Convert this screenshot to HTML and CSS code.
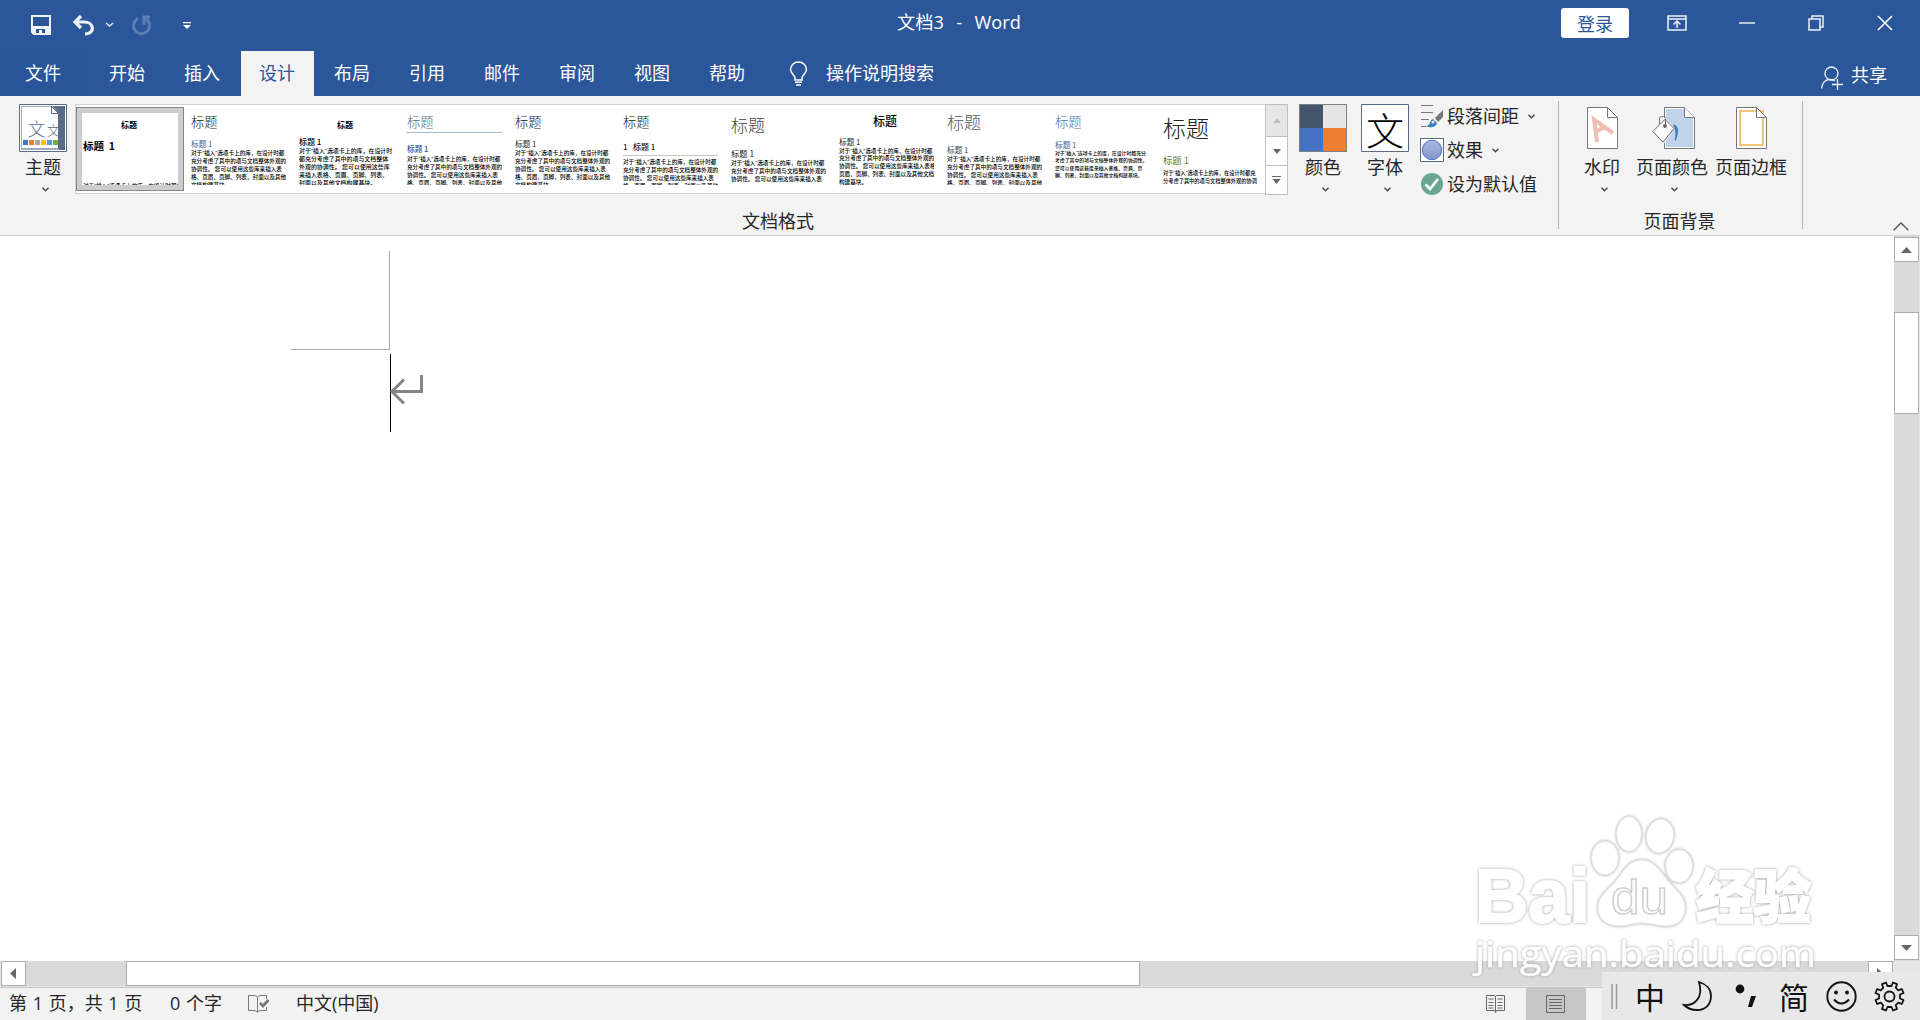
FILE: index.html
```html
<!DOCTYPE html>
<html lang="zh-CN">
<head>
<meta charset="utf-8">
<title>文档3 - Word</title>
<link rel="stylesheet" href="styles.css">
</head>
<body>
<div class="app">
  <header class="titlebar">
    <div class="quick">
      <svg class="save" width="20" height="20" viewBox="0 0 20 20"><path d="M1 1h18v18H3l-2-2z" fill="none" stroke="#f0f3f8" stroke-width="2"/><path d="M2 11h16v1.500H2zM1 12h4v7H1zM14 12h5v7h-5zM5 12h9v2H5zM8 15h3v4H8z" fill="#f0f3f8"/></svg>
      <svg class="undo" width="24" height="22" viewBox="0 0 24 22"><path d="M9 1L3 7l6 6M3 7h9c11 0 11 12 1 12" fill="none" stroke="#f0f3f8" stroke-width="3.200"/></svg>
      <svg class="undo-more" width="9" height="6" viewBox="0 0 9 6"><path d="M1 1l3.500 3L8 1" fill="none" stroke="#e0e6f0" stroke-width="1.400"/></svg>
      <svg class="redo" width="22" height="22" viewBox="0 0 22 22"><path d="M7 3.500A8 8 0 1 0 15 4M13 10V2h6" fill="none" stroke="#5c7db2" stroke-width="3"/></svg>
      <svg class="custom" width="8" height="8" viewBox="0 0 8 8"><path d="M0 0h8v1.300H0zM0 3h8L4 7z" fill="#fff"/></svg>
    </div>
    <h1 class="doc-title">文档3&nbsp; -&nbsp; Word</h1>
    <div class="window-tools">
      <button class="login">登录</button>
      <svg class="rdo" width="20" height="16" viewBox="0 0 20 16"><path d="M1 1h18v14H1zM1 4h18M10 13V7M6.500 9.500L10 6l3.500 3.500" fill="none" stroke="#eef2f8" stroke-width="1.500"/></svg>
      <svg class="min" width="16" height="2" viewBox="0 0 16 2"><path d="M0 1h16" stroke="#e4eaf3" stroke-width="1.500"/></svg>
      <svg class="restore" width="16" height="16" viewBox="0 0 16 16"><path d="M1 4h11v11H1zM4 4V1h11v11h-3" fill="none" stroke="#eef2f8" stroke-width="1.500"/></svg>
      <svg class="close" width="16" height="16" viewBox="0 0 16 16"><path d="M1 1l14 14M15 1L1 15" stroke="#fff" stroke-width="1.600"/></svg>
    </div>
  </header>

  <nav class="tabs">
    <span class="tab file">文件</span>
    <span class="tab">开始</span>
    <span class="tab">插入</span>
    <span class="tab active">设计</span>
    <span class="tab">布局</span>
    <span class="tab">引用</span>
    <span class="tab">邮件</span>
    <span class="tab">审阅</span>
    <span class="tab">视图</span>
    <span class="tab">帮助</span>
    <svg class="bulb" width="19" height="25" viewBox="0 0 19 25"><path d="M6 19v-2.500C5.500 14 1.500 12 1.500 8.500a8 7.500 0 0 1 16 0C17.500 12 13.500 14 13 16.500V19zM6 21.300h7M7 24h5" fill="none" stroke="#fff" stroke-width="1.500"/></svg>
    <span class="tell">操作说明搜索</span>
    <div class="share">
      <svg width="22" height="24" viewBox="0 0 22 24"><circle cx="10.500" cy="7.500" r="6.500" fill="none" stroke="#eef2f8" stroke-width="1.300"/><path d="M.700 22.500c0-5 3.500-9 8-9 2.500 0 4 .5 5 1.500M16.500 13v11M11 18.500h11" fill="none" stroke="#eef2f8" stroke-width="1.300"/></svg>
      <span>共享</span>
    </div>
  </nav>

  <section class="ribbon">
    <div class="group format">
      <div class="controls">
        <div class="big theme">
          <svg width="48" height="48" viewBox="0 0 48 48"><path d="M.5.500h47v47H.500z" fill="#fff" stroke="#5b6b85"/><path d="M2 2h44v44H2z" fill="#9cabbf"/><path d="M34 2h12v44H40V10z" fill="#5b6b85"/><path d="M3 3h29l7 7v34H3z" fill="#fff"/><path d="M32.500 2.500v7h7z" fill="#fff" stroke="#5b6b85"/><text x="8.500" y="32" font-size="18" fill="#6b7a92">文</text><text x="28" y="31" font-size="13" fill="#5b6b85">文</text><path d="M39 10h7v35h-7z" fill="#5b6b85"/><path d="M4 36h5v5H4z" fill="#4472c4"/><path d="M10 36h5v5h-5z" fill="#ed7d31"/><path d="M16 36h5v5h-5z" fill="#a5a5a5"/><path d="M22 36h5v5h-5z" fill="#ffc000"/><path d="M28 36h5v5h-5z" fill="#5b9bd5"/><path d="M34 36h5v5h-5z" fill="#70ad47"/></svg>
          <span>主题</span>
          <svg class="chev" width="7" height="5" viewBox="0 0 7 5"><path d="M.5.800l3 3 3-3"/></svg>
        </div>
        <div class="gallery">
          <div class="cell selected"><div class="thumb s1">
            <b class="t">标题</b><b class="h">标题&nbsp; 1</b><p>对于“插入”选项卡上的库，在设计时都充</p>
          </div></div>
          <div class="cell"><div class="thumb s2">
            <span class="t">标题</span><span class="h">标题 1</span>
            <p>对于“插入”选项卡上的库，在设计时都</p><p>充分考虑了其中的项与文档整体外观的</p><p>协调性。 您可以使用这些库来插入表</p><p>格、页眉、页脚、列表、封面以及其他</p><p>文档构建基块。</p>
          </div></div>
          <div class="cell"><div class="thumb s3">
            <b class="t">标题</b><span class="h">标题 1</span>
            <p>对于“插入”选项卡上的库，在设计时</p><p>都充分考虑了其中的项与文档整体</p><p>外观的协调性。 您可以使用这些库</p><p>来插入表格、页眉、页脚、列表、</p><p>封面以及其他文档构建基块。</p>
          </div></div>
          <div class="cell"><div class="thumb s4">
            <span class="t">标题</span><span class="h">标题 1</span>
            <p>对于“插入”选项卡上的库，在设计时都</p><p>充分考虑了其中的项与文档整体外观的</p><p>协调性。 您可以使用这些库来插入表</p><p>格、页眉、页脚、列表、封面以及其他</p>
          </div></div>
          <div class="cell"><div class="thumb s5">
            <span class="t">标题</span><span class="h">标题 1</span>
            <p>对于“插入”选项卡上的库，在设计时都</p><p>充分考虑了其中的项与文档整体外观的</p><p>协调性。 您可以使用这些库来插入表</p><p>格、页眉、页脚、列表、封面以及其他</p><p>文档构建基块。</p>
          </div></div>
          <div class="cell"><div class="thumb s6">
            <span class="t">标题</span><span class="h">1&nbsp;&nbsp; 标题 1</span>
            <p>对于“插入”选项卡上的库，在设计时都</p><p>充分考虑了其中的项与文档整体外观的</p><p>协调性。 您可以使用这些库来插入表</p><p>格、页眉、页脚、列表、封面以及其他</p>
          </div></div>
          <div class="cell"><div class="thumb s7">
            <span class="t">标题</span><span class="h">标题 1</span>
            <p>对于“插入”选项卡上的库，在设计时都</p><p>充分考虑了其中的项与文档整体外观的</p><p>协调性。 您可以使用这些库来插入表</p>
          </div></div>
          <div class="cell"><div class="thumb s8">
            <span class="t">标题</span><span class="h">标题 1</span>
            <p>对于“插入”选项卡上的库，在设计时都</p><p>充分考虑了其中的项与文档整体外观的</p><p>协调性。 您可以使用这些库来插入表格</p><p>页眉、页脚、列表、封面以及其他文档</p><p>构建基块。</p>
          </div></div>
          <div class="cell"><div class="thumb s9">
            <span class="t">标题</span><span class="h">标题 1</span>
            <p>对于“插入”选项卡上的库，在设计时都</p><p>充分考虑了其中的项与文档整体外观的</p><p>协调性。 您可以使用这些库来插入表</p><p>格、页眉、页脚、列表、封面以及其他</p>
          </div></div>
          <div class="cell"><div class="thumb s10">
            <span class="t">标题</span><span class="h">标题 1</span>
            <p>对于“插入”选项卡上的库，在设计时都充分</p><p>考虑了其中的项与文档整体外观的协调性。</p><p>您可以使用这些库来插入表格、页眉、页</p><p>脚、列表、封面以及其他文档构建基块。</p>
          </div></div>
          <div class="cell"><div class="thumb s11">
            <span class="t">标题</span><span class="h">标题 1</span>
            <p>对于“插入”选项卡上的库，在设计时都充</p><p>分考虑了其中的项与文档整体外观的协调</p>
          </div></div>
        </div>
        <div class="gallery-nav">
          <div class="off"><svg width="8" height="5" viewBox="0 0 8 5"><path d="M0 5l4-5 4 5z" fill="#bdbdbd"/></svg></div>
          <div><svg width="8" height="5" viewBox="0 0 8 5"><path d="M0 0h8L4 5z" fill="#666"/></svg></div>
          <div><svg width="9" height="8" viewBox="0 0 9 8"><path d="M0 0h9v1H0zM.5 3h8l-4 5z" fill="#666"/></svg></div>
        </div>
        <div class="big colors">
          <svg width="48" height="48" viewBox="0 0 48 48"><path d="M0 0h48v48H0z" fill="#7f7f7f"/><path d="M1 1h23v23H1z" fill="#44546a"/><path d="M24 1h23v23H24z" fill="#e7e6e6"/><path d="M1 24h23v23H1z" fill="#4472c4"/><path d="M24 24h23v23H24z" fill="#ed7d31"/></svg>
          <span>颜色</span>
          <svg class="chev" width="7" height="5" viewBox="0 0 7 5"><path d="M.5.800l3 3 3-3"/></svg>
        </div>
        <div class="big fonts">
          <svg width="48" height="48" viewBox="0 0 48 48"><path d="M.5.500h47v47H.500z" fill="#fff" stroke="#5b6b85"/><text x="5" y="41" font-size="38" fill="#000">文</text></svg>
          <span>字体</span>
          <svg class="chev" width="7" height="5" viewBox="0 0 7 5"><path d="M.5.800l3 3 3-3"/></svg>
        </div>
        <div class="stack">
          <div class="row">
            <svg width="24" height="24" viewBox="0 0 24 24"><path d="M1 1.500h12M1 8.500h12M1 15.500h8M1 22.500h5" stroke="#777"/><path d="M6 22c5 0 3-6 7-7l4 4c-1 5-8 5-11 3z" fill="#3f7fbf"/><circle cx="13" cy="18" r="1.500" fill="#dce8f4"/><path d="M15 14l8-8v7l-5 5z" fill="#777"/></svg>
            <span>段落间距</span><svg class="chev" width="7" height="5" viewBox="0 0 7 5"><path d="M.5.800l3 3 3-3"/></svg>
          </div>
          <div class="row">
            <svg width="24" height="24" viewBox="0 0 24 24"><defs><linearGradient id="orb" x2="0" y2="1"><stop stop-color="#a9b5df"/><stop offset="1" stop-color="#8796d0"/></linearGradient></defs><path d="M.5.500h23v23H.500z" fill="#fff" stroke="#5b6b85"/><circle cx="12" cy="12" r="9.700" fill="url(#orb)" stroke="#4472c4"/></svg>
            <span>效果</span><svg class="chev" width="7" height="5" viewBox="0 0 7 5"><path d="M.5.800l3 3 3-3"/></svg>
          </div>
          <div class="row">
            <svg width="24" height="24" viewBox="0 0 24 24"><circle cx="12" cy="12" r="11" fill="#6aa590"/><path d="M5.500 12.500l4.500 4.500 8-10" fill="none" stroke="#fff" stroke-width="2.800"/></svg>
            <span>设为默认值</span>
          </div>
        </div>
      </div>
      <div class="group-label">文档格式</div>
    </div>
    <div class="group page">
      <div class="controls">
        <div class="big watermark-btn">
          <svg width="31" height="42" viewBox="0 0 31 42"><path d="M.5.500h20l10 10v31H.500z" fill="#fff" stroke="#777"/><path d="M20.500.500v10h10" fill="none" stroke="#777"/><path d="M10 35L7 12.500 26 26M9 24.500l8-4" fill="none" stroke="#f0bfb3" stroke-width="4"/></svg>
          <span>水印</span>
          <svg class="chev" width="7" height="5" viewBox="0 0 7 5"><path d="M.5.800l3 3 3-3"/></svg>
        </div>
        <div class="big page-color">
          <svg width="43" height="42" viewBox="0 0 43 42"><path d="M12.500.500h20l10 10v31h-30z" fill="#fff" stroke="#777"/><path d="M14 2h18v9h9v29H14z" fill="#c0d3ea"/><path d="M32.500.500v10h10" fill="#fff" stroke="#777"/><path d="M-1 24.500L12 10l11 11-12 17z" fill="#eef3f9"/><path d="M20 17c6 0 9 5 4 17h-2c2-7 1-13-2-17z" fill="#3f7fbf" stroke="#e6eef7" stroke-width=".6"/><path d="M.800 24.500L13 12.500l9 9L11 35z" fill="#fff" stroke="#666"/><path d="M7.500 17v-5.500q0-2 2-2h2q2 0 2 2V19" fill="none" stroke="#777"/><circle cx="13" cy="19" r="2" fill="#666"/></svg>
          <span>页面颜色</span>
          <svg class="chev" width="7" height="5" viewBox="0 0 7 5"><path d="M.5.800l3 3 3-3"/></svg>
        </div>
        <div class="big page-border">
          <svg width="31" height="42" viewBox="0 0 31 42"><path d="M.5.500h20l10 10v31H.500z" fill="#fff" stroke="#777"/><path d="M4 4h23v34H4z" fill="none" stroke="#efc67d" stroke-width="2"/><path d="M20.500.500v10h10z" fill="#fff" stroke="#777"/></svg>
          <span>页面边框</span>
        </div>
      </div>
      <div class="group-label">页面背景</div>
    </div>
    <svg class="collapse" width="16" height="9" viewBox="0 0 16 9"><path d="M.7 8.300L8 1l7.300 7.300" fill="none" stroke="#555" stroke-width="1.400"/></svg>
  </section>

  <main class="workspace">
    <div class="canvas">
      <div class="corner"></div>
      <div class="line">
        <span class="caret"></span>
        <svg width="33" height="30" viewBox="0 0 33 30"><path d="M30.500 0v16.500H2M13 4.500L1 16.500l12 12" fill="none" stroke="#858585" stroke-width="3"/></svg>
      </div>
    </div>
    <div class="vscroll">
      <div class="btn"><svg width="11" height="6" viewBox="0 0 11 6"><path d="M0 6l5.500-6L11 6z" fill="#666"/></svg></div>
      <div class="vthumb"></div>
      <div class="btn"><svg width="11" height="6" viewBox="0 0 11 6"><path d="M0 0h11L5.500 6z" fill="#666"/></svg></div>
    </div>
  </main>
  <div class="hscroll">
    <div class="btn"><svg width="6" height="11" viewBox="0 0 6 11"><path d="M6 0v11L0 5.500z" fill="#666"/></svg></div>
    <div class="track"><div class="hthumb"></div></div>
    <div class="btn"><svg width="6" height="11" viewBox="0 0 6 11"><path d="M0 0v11l6-5.500z" fill="#666"/></svg></div>
  </div>
  <footer class="status">
    <span class="pages">第 1 页，共 1 页</span>
    <span class="words">0 个字</span>
    <svg class="proof" width="21" height="18" viewBox="0 0 21 18"><path d="M9.500 17V2Q8 .5 6 .500H.500v15H6q3 0 3.500 2 .5-2 3.500-2h5.500V12M9.500 2Q11 .5 13 .500h5.500V4" fill="none" stroke="#777"/><path d="M12 8l3 3 5.500-6" fill="none" stroke="#777" stroke-width="2.600"/></svg>
    <span class="lang">中文(中国)</span>
    <div class="views">
      <svg width="19" height="18" viewBox="0 0 19 18"><path d="M9.500 1.500L8.500.500h-8v15h8l1 2 1-2h8V.500h-8zM9.500 1v15M2.500 4h5M2.500 7.500h5M2.500 10.500h5M2.500 13h5M11.500 4h5M11.500 7.500h5M11.500 10.500h5M11.500 13h5" fill="none" stroke="#666"/></svg>
      <div class="view on"><svg width="19" height="18" viewBox="0 0 19 18"><path d="M.5.500h18v17H.500zM3 4.500h13M3 7.500h13M3 10.500h13M3 13.500h13" fill="none" stroke="#666"/></svg></div>
    </div>
  </footer>

  <svg class="brand" width="370" height="175" viewBox="0 0 370 175">
    <g class="paw">
      <ellipse cx="135" cy="48" rx="13.500" ry="17"/>
      <ellipse cx="159" cy="24" rx="12.500" ry="17.500"/>
      <ellipse cx="190" cy="26" rx="13.500" ry="17" transform="rotate(10 190 26)"/>
      <ellipse cx="209" cy="56" rx="13.500" ry="16.500"/>
      <path d="M171 50c10 0 16 6 24 17 9 12 20 18 20 30 0 15-10 20-22 19-8-1-14-3-22-3s-13 3-21 3c-12 0-22-5-22-19 0-12 12-18 20-29 8-12 14-18 23-18z"/>
    </g>
    <g class="wordmark">
      <text x="5" y="112" font-size="76" textLength="115" lengthAdjust="spacingAndGlyphs" class="bai">Bai</text>
      <text x="141" y="104" font-size="49" textLength="57" lengthAdjust="spacingAndGlyphs" class="du">du</text>
      <text x="226" y="108" font-size="58" textLength="115" lengthAdjust="spacingAndGlyphs" class="exp">经验</text>
      <text x="5" y="157" font-size="37" textLength="341" lengthAdjust="spacingAndGlyphs" class="url">jingyan.baidu.com</text>
    </g>
  </svg>

  <aside class="ime">
    <svg class="grip" width="7" height="25" viewBox="0 0 7 25"><path d="M1 0v25M5.500 0v25" stroke="#999" stroke-width="1.500"/></svg>
    <span class="zh">中</span>
    <svg class="moon" width="29" height="30" viewBox="0 0 29 30"><path d="M16 1c7 2 12 7 12 14 0 9-6 14-14 14-6 0-10-2-13-5 10 1 20-7 15-23z" fill="none" stroke="#111" stroke-width="1.800"/></svg>
    <svg class="punct" width="22" height="24" viewBox="0 0 22 24"><circle cx="5" cy="5" r="4.400" fill="#111"/><path d="M16 12h5l-4 11h-4z" fill="#111"/></svg>
    <span class="simp">简</span>
    <svg class="smile" width="31" height="31" viewBox="0 0 31 31"><g fill="none" stroke="#111" stroke-width="1.900"><circle cx="15.500" cy="15.500" r="14.200"/><path d="M8 18.500q7.500 8 15 0"/></g><circle cx="10" cy="11.500" r="1.900" fill="#111"/><circle cx="21" cy="11.500" r="1.900" fill="#111"/></svg>
    <svg class="gear" width="31" height="31" viewBox="0 0 31 31"><g fill="none" stroke="#111" stroke-width="1.800" stroke-linejoin="round"><circle cx="15.500" cy="15.500" r="5"/><path d="M12 1.500L13.500 5h4L19 1.500l4 1.700L21.700 6.700l2.600 2.600 3.500-1.300 1.700 4L26 13.500v4l3.500 1.500-1.700 4-3.500-1.300-2.600 2.600 1.300 3.500-4 1.700L17.500 26h-4L12 29.500l-4-1.700 1.300-3.500-2.600-2.600L3.200 23l-1.700-4L5 17.500v-4L1.500 12l1.700-4 3.500 1.300 2.600-2.600L8 3.200z"/></g></svg>
  </aside>
</div>
</body>
</html>
```
FILE: styles.css
```css
* { box-sizing: border-box; }
body {
  margin: 0;
  font-family: "Open Sans", "Noto Sans CJK SC", sans-serif;
  font-size: 18px;
  color: #262626;
}
svg { display: block; flex: none; overflow: visible; }
svg text { font-family: "Noto Sans CJK SC", sans-serif; font-weight: 300; }
.app {
  position: relative;
  width: 1920px;
  height: 1020px;
  display: flex;
  flex-direction: column;
  overflow: hidden;
  background: #fff;
  white-space: nowrap;
}

/* title bar */
.titlebar {
  height: 51px;
  flex: none;
  display: grid;
  grid-template-columns: 897px 1fr 359px;
  background: #2b579a;
  color: #fff;
}
.quick { display: flex; align-items: flex-start; padding: 15px 0 0 31px; }
.undo { margin-left: 21px; }
.undo-more { margin: 7px 0 0 9px; }
.redo { margin-left: 17px; }
.custom { margin: 7px 0 0 30px; }
.doc-title { margin: 0; font-size: 18.200px; font-weight: 400; line-height: 45px; word-spacing: 1.500px; }
.window-tools { display: flex; align-items: center; height: 46px; }
.login {
  width: 68px;
  height: 30px;
  margin: 0 38px 0 0;
  padding: 0;
  border: 0;
  border-radius: 3px;
  background: #fff;
  color: #2b579a;
  font: 18px/28px "Noto Sans CJK SC", sans-serif;
}
.min { margin-left: 52px; }
.restore { margin-left: 53px; }
.close { margin-left: 53px; }

/* ribbon tabs */
.tabs {
  height: 45px;
  flex: none;
  display: flex;
  align-items: center;
  background: #2b579a;
  color: #fff;
  line-height: 45px;
  font-family: "Noto Sans CJK SC", sans-serif;
}
.tab { width: 73px; margin: 0 0 0 2px; height: 45px; line-height: 42px; text-align: center; text-indent: -1px; }
.tab.file { width: 89px; margin: 0; padding-left: 26px; text-align: left; background: #2a5699; }
.tab.active { background: #f3f3f3; color: #2b579a; }
.bulb { margin: -1px 0 0 25px; }
.tell { margin-left: 18px; height: 45px; line-height: 42px; }
.share { margin-left: auto; margin-right: 33px; display: flex; gap: 8px; }
.share svg { margin-top: 13px; }
.share span { line-height: 42px; }

/* ribbon */
.ribbon {
  height: 140px;
  flex: none;
  display: flex;
  background: #f3f3f3;
  border-bottom: 1px solid #d2d2d2;
  font-family: "Noto Sans CJK SC", sans-serif;
}
.group { position: relative; display: flex; flex-direction: column; }
.group::after {
  content: "";
  position: absolute;
  right: 0;
  top: 5px;
  width: 1px;
  height: 128px;
  background: #b5b5b5;
}
.format { width: 1559px; }
.page { width: 244px; }
.controls { display: flex; height: 111px; padding-top: 8px; align-items: flex-start; }
.group-label { padding-right: 3px; text-align: center; line-height: 26px; }
.big { display: flex; flex-direction: column; align-items: center; width: 48px; }
.big span { line-height: 26px; margin-top: 1px; }
.chev { fill: none; stroke: #444; stroke-width: 1.400px; }
.big .chev { margin: 8px 0 0 4px; }
.theme { margin-left: 19px; }
.gallery {
  display: flex;
  width: 1190px;
  height: 90px;
  margin-left: 8px;
  border: 1px solid #d0d0d0;
  border-right: 0;
  background: #fff;
}
.gallery-nav { width: 23px; height: 91px; border: 1px solid #c0c0c0; background: #fff; }
.gallery-nav div { height: 29px; display: flex; align-items: center; justify-content: center; border-bottom: 1px solid #c0c0c0; }
.gallery-nav .off { height: 32px; background: #e6e6e6; }
.gallery-nav div:last-child { border: 0; height: 28px; }
.cell { flex: none; width: 108px; height: 84px; margin-top: 2px; padding: 6px; }
.cell.selected { background: #cdcdcb; padding: 5px; border: 1px solid #868686; }

/* style set previews: --tc, --hc and --bc are the vertical centres of title, heading and first body line */
.thumb {
  --tc: 9.500px; --ts: 13.300px; --hc: 31px; --hs: 7.700px; --bc: 40.500px; --bs: 5.600px; --lp: 8px;
  width: 96px;
  height: 72px;
  padding-left: 1px;
  overflow: hidden;
  display: flex;
  flex-direction: column;
  background: #fff;
  color: #222;
}
.thumb > * { flex: none; }
.thumb .t { height: 20px; line-height: 20px; font-size: var(--ts); margin-top: calc(var(--tc) - 10.500px); font-weight: 300; }
.thumb .h { height: 10px; line-height: 10px; font-size: var(--hs); margin-top: calc(var(--hc) - var(--tc) - 15px); }
.thumb .h + p { margin-top: calc(var(--bc) - var(--hc) - 5px - var(--lp) / 2); }
.thumb p {
  margin: 0;
  height: var(--lp);
  line-height: var(--lp);
  font-family: "Open Sans", "Noto Sans CJK SC", sans-serif;
  font-size: var(--bs);
  font-weight: 500;
  color: #000;
}
.s1 { --tc: 12px; --ts: 8px; --hc: 33px; --hs: 10.500px; --bc: 73px; color: #000; }
.s1 .t, .s3 .t, .s8 .t { text-align: center; padding-right: 3px; }
.thumb b.t { font-weight: 700; }
.s2 .h { color: #3d5a94; }
.s3 { --tc: 12px; --ts: 8px; --hc: 29.500px; --hs: 8px; --bc: 39.500px; --bs: 5.950px; --lp: 7.900px; color: #000; }
.s3 .h { font-weight: 500; }
.s4 { --hc: 36.500px; --bc: 46.500px; --lp: 8.200px; }
.s4 .t { color: #5a6a80; box-shadow: 0 1px #a3bde0; margin-left: -1px; padding-left: 1px; }
.s4 .h { color: #2f5496; font-weight: 500; }
.s6 { --hc: 34px; --hs: 8px; --bc: 49.500px; }
.s6 .h { font-weight: 500; box-shadow: 0 3px #fff, 0 4px #c8c8c8; }
.s7 { --tc: 12px; --ts: 17px; --hc: 40.500px; --hs: 8.300px; --bc: 51.500px; --lp: 7.800px; }
.s7 .t { color: #444; }
.s8 { --tc: 8.500px; --ts: 12px; --hc: 29px; --bc: 39px; --lp: 7.800px; }
.s8 .t { color: #000; font-weight: 500; }
.s9 { --ts: 17px; --hc: 37px; --bc: 47.500px; --lp: 7.900px; }
.s9 .t { color: #4a5a70; }
.s9 .h { color: #323e4f; }
.s10 { --tc: 9.500px; --hc: 32.500px; --bc: 41px; --bs: 4.870px; --lp: 7.500px; }
.s10 .t { color: #4a70b5; }
.s10 .h { color: #3d5a94; }
.s11 { --tc: 14.800px; --ts: 23px; --hc: 47.500px; --hs: 9.300px; --bc: 60.500px; --bs: 5.230px; --lp: 8.200px; }
.s11 .h { color: #538135; }

.colors { margin-left: 11px; }
.fonts { margin-left: 14px; }
.stack { margin-left: 11px; display: flex; flex-direction: column; gap: 10px; }
.row { display: flex; align-items: center; height: 24px; }
.row span { margin-left: 3px; line-height: 24px; height: 26px; }
.row .chev { margin-left: 9px; }
.page .controls { padding-top: 11px; }
.page .big span { margin-top: 4px; }
.watermark-btn { width: 36px; margin-left: 25px; }
.page-color { width: 72px; margin-left: 16px; }
.page-color svg:first-child { margin-left: 2px; }
.page-border { width: 72px; margin-left: 7px; }
.page .big .chev { margin-left: 5px; }
.collapse { margin: 126px 0 0 90px; }

/* document area */
.workspace { flex: 1; display: flex; min-height: 0; background: #fff; }
.canvas { flex: 1; padding: 15px 0 0 291px; }
.corner { width: 99px; height: 99px; border: solid #aaa; border-width: 0 1px 1px 0; }
.line { display: flex; margin: 4px 0 0 99px; }
.caret { width: 1px; height: 78px; background: #000; }
.line svg { margin: 21px 0 0 0; }
.btn { width: 25px; height: 25px; flex: none; display: flex; align-items: center; justify-content: center; background: #fff; border: 1px solid #ababab; }
.vscroll { width: 26px; padding: 1px 0 1px; display: flex; flex-direction: column; background: #dadada; border-right: 1px solid #e9e9e9; }
.vthumb { height: 102px; margin: 50px 0 auto; background: #fff; border: 1px solid #ababab; }
.hscroll { height: 26px; flex: none; display: flex; padding: 0 27px 0 1px; background: #e6e6e6; }
.hscroll .btn { padding-right: 1px; }
.track { flex: 1; height: 25px; background: #dadada; padding-left: 100px; }
.hthumb { width: 1014px; height: 25px; background: #fff; border: 1px solid #ababab; }

/* status bar */
.status {
  height: 33px;
  flex: none;
  display: flex;
  align-items: center;
  border-top: 1px solid #c6c6c6;
  background: #f2f2f2;
}
.status > span { height: 32px; line-height: 30px; }
.pages { margin-left: 9px; width: 161px; word-spacing: 1px; }
.words { width: 78px; word-spacing: 1px; }
.lang { margin-left: 27px; }
.views { margin-left: auto; margin-right: 334px; display: flex; align-items: center; gap: 21px; }
.view { width: 60px; height: 32px; display: flex; align-items: center; justify-content: center; padding-right: 2px; background: #c6c6c6; }

/* watermark */
.brand { position: absolute; left: 1470px; top: 810px; opacity: .92; filter: drop-shadow(0 0 1.500px #999); }
.paw { fill: #fff; stroke: #e2e2e2; stroke-width: 1px; }
.wordmark text { fill: #fff; stroke: #fff; stroke-width: 2px; }
.wordmark .bai { font-family: "Liberation Sans", sans-serif; font-weight: 700; }
.wordmark .du { font-family: "Liberation Sans", sans-serif; font-weight: 400; stroke: #ccc; stroke-width: 1.500px; }
.wordmark .exp { font-family: "Noto Sans CJK SC", sans-serif; font-weight: 900; }
.wordmark .url { font-family: "Open Sans", sans-serif; font-weight: 400; stroke-width: .500px; }

/* input method bar */
.ime {
  position: absolute;
  left: 1602px;
  top: 972px;
  width: 318px;
  height: 48px;
  display: flex;
  align-items: center;
  padding-left: 9px;
  background: #e8e8e8;
  color: #111;
  font-family: "Noto Sans CJK SC", sans-serif;
  font-size: 30px;
  line-height: 48px;
}
.zh { margin-left: 17px; }
.moon { margin-left: 18px; }
.punct { margin-left: 23px; }
.simp { margin-left: 22px; }
.smile { margin-left: 17px; }
.gear { margin-left: 17px; }
```
